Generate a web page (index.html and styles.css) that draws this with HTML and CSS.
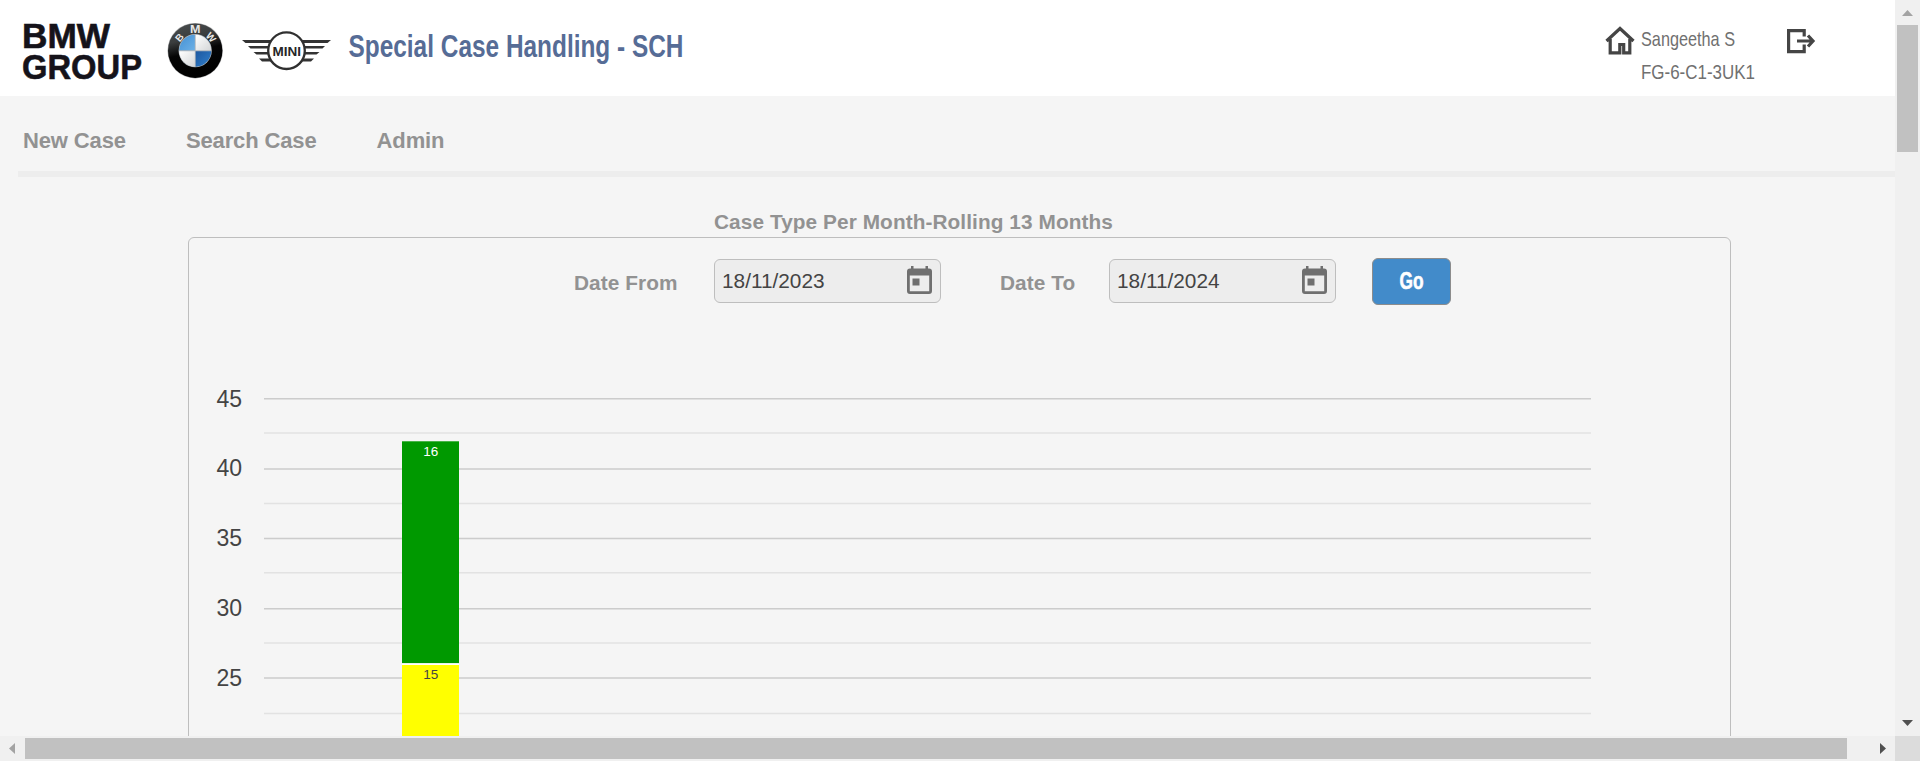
FILE: index.html
```html
<!DOCTYPE html>
<html lang="en">
<head>
<meta charset="utf-8">
<title>Special Case Handling - SCH</title>
<link rel="stylesheet" href="styles.css">
</head>
<body>
<div class="frame">
  <div class="page">
    <header class="header">
      <svg class="logos" width="342" height="96" viewBox="0 0 342 96" role="img" aria-label="BMW Group, BMW, MINI">
        <defs>
          <linearGradient id="ring" x1="0" y1="0" x2="0.25" y2="1">
            <stop offset="0" stop-color="#4b4f50"/><stop offset="0.35" stop-color="#3a3d3e"/><stop offset="0.6" stop-color="#050505"/><stop offset="1" stop-color="#000"/>
          </linearGradient>
          <linearGradient id="blueA" x1="0" y1="0" x2="1" y2="1"><stop offset="0" stop-color="#4390d4"/><stop offset="1" stop-color="#6cb0e6"/></linearGradient>
          <linearGradient id="blueB" x1="0" y1="0" x2="1" y2="1"><stop offset="0" stop-color="#1d58a0"/><stop offset="1" stop-color="#3080cc"/></linearGradient>
          <linearGradient id="silver" x1="0" y1="0" x2="1" y2="1"><stop offset="0" stop-color="#fff"/><stop offset="1" stop-color="#d4d6d8"/></linearGradient>
        </defs>
        <g class="wordmark">
          <text x="22" y="48" textLength="88" lengthAdjust="spacingAndGlyphs">BMW</text>
          <text x="22" y="78.500" textLength="120" lengthAdjust="spacingAndGlyphs">GROUP</text>
        </g>
        <circle cx="195.2" cy="50.7" r="27.7" fill="#b0b1b2"/>
        <circle cx="195.2" cy="50.7" r="27.200" fill="url(#ring)"/>
        <circle cx="195.2" cy="50.7" r="16.6" fill="#aeb5bb"/>
        <path d="M194.8 50.3V34.7A16 16 0 0 0 179.2 50.3Z" fill="url(#blueA)"/>
        <path d="M195.7 50.3V34.7A16 16 0 0 1 211.2 50.3Z" fill="url(#silver)"/>
        <path d="M195.7 51.2V66.7A16 16 0 0 0 211.2 51.2Z" fill="url(#blueB)"/>
        <path d="M194.8 51.2V66.7A16 16 0 0 1 179.2 51.2Z" fill="url(#silver)"/>
        <g class="roundel-text">
          <text x="189.9" y="33.3" text-anchor="start" textLength="10.500" lengthAdjust="spacingAndGlyphs">M</text>
          <text x="195.2" y="33.600" text-anchor="middle" transform="rotate(-50 195.2 50.7)">B</text>
          <text x="195.2" y="33.600" text-anchor="middle" transform="rotate(50 195.2 50.7)">W</text>
        </g>
        <g fill="#333">
          <path d="M242 40h29l-1.500 3H245.500Z"/><path d="M248 46h21.500v2.500H250.500Z"/><path d="M253.500 52h15.500l.5 2.500H256.500Z"/><path d="M259 58.500h11.500l1.500 3H262Z"/>
          <path d="M331 40h-29l1.500 3H327.500Z"/><path d="M325 46h-21.500v2.500H322.500Z"/><path d="M319.500 52h-15.500l-.5 2.500H316.500Z"/><path d="M314 58.500h-11.500l-1.500 3H311Z"/>
        </g>
        <circle cx="286.500" cy="50.700" r="18.300" fill="#fff" stroke="#303030" stroke-width="2.300"/>
        <text class="mini" x="272.500" y="55.500" textLength="28.500" lengthAdjust="spacingAndGlyphs">MINI</text>
      </svg>
      <svg class="title" width="350" height="96" viewBox="0 0 350 96"><text x="6.500" y="57" textLength="335" lengthAdjust="spacingAndGlyphs">Special Case Handling - SCH</text></svg>
      <div class="account">
        <svg class="home" width="30" height="30" viewBox="0 0 30 30"><path d="M1.500 15 15 2.500 28.500 15M5.200 13V26.800H14.800V18.500H18.700V26.800H24.800V13"/></svg>
        <svg class="user" width="122" height="96" viewBox="0 0 122 96"><text x="6" y="46" textLength="94" lengthAdjust="spacingAndGlyphs">Sangeetha S</text><text x="6" y="79" textLength="114" lengthAdjust="spacingAndGlyphs">FG-6-C1-3UK1</text></svg>
        <svg class="logout" width="30" height="28" viewBox="0 0 30 28"><path d="M19.200 9.500V3.600H3.600V24.600H19.200V17.500M12 14H28M23 8.500 28 14 23 19.500"/></svg>
      </div>
    </header>
    <nav class="nav"><a>New Case</a><a>Search Case</a><a>Admin</a></nav>
    <main>
      <h2 class="heading">Case Type Per Month-Rolling 13 Months</h2>
      <section class="panel">
        <div class="filters">
          <label class="label from">Date From</label>
          <div class="date"><span>18/11/2023</span>
            <svg width="27" height="30" viewBox="0 0 27 30"><use href="#cal"/></svg></div>
          <label class="label to">Date To</label>
          <div class="date"><span>18/11/2024</span>
            <svg width="27" height="30" viewBox="0 0 27 30"><g id="cal"><path fill-rule="evenodd" d="M5 1h2.500v2.500H19.500V1h2.500v2.500H23Q26 3.500 26 6.500V26Q26 29 23 29H4Q1 29 1 26V6.500Q1 3.500 4 3.500h1ZM3.800 10.500V26.200H23.200V10.500Z"/><path d="M6.500 13.500H13.500V20.500H6.500Z"/></g></svg></div>
          <button class="go"><svg width="26" height="30" viewBox="0 0 26 30"><text x="0.500" y="22.300" textLength="24" lengthAdjust="spacingAndGlyphs">Go</text></svg></button>
        </div>
        <svg class="chart" width="1541" height="420" viewBox="189 316 1541 420">
          <g class="minor"><path d="M264 433H1591M264 503.500H1591M264 572.700H1591M264 643H1591M264 713.400H1591"/></g>
          <g class="major"><path d="M264 398.800H1591M264 469.100H1591M264 538.400H1591M264 608.700H1591M264 678H1591"/></g>
          <rect x="402" y="441.300" width="57" height="222" fill="#090"/>
          <rect x="402" y="663.300" width="57" height="1.700" fill="#fff"/>
          <rect x="402" y="665" width="57" height="71" fill="#ff0"/>
          <g class="axis"><text x="242" y="406.700">45</text><text x="242" y="475.700">40</text><text x="242" y="545.700">35</text><text x="242" y="615.700">30</text><text x="242" y="685.700">25</text></g>
          <g class="value"><text x="430.700" y="456" fill="#fff">16</text><text x="430.700" y="679" fill="#444">15</text></g>
        </svg>
      </section>
    </main>
  </div>
  <div class="bar vertical">
    <svg width="25" height="25"><path d="M7 16H18L12.500 10Z" fill="#a3a3a3"/></svg>
    <div class="thumb"></div>
    <svg width="25" height="25"><path d="M7 9H18L12.500 15Z" fill="#505050"/></svg>
  </div>
  <div class="bar horizontal">
    <svg width="25" height="25"><path d="M15 7V18L9 12.500Z" fill="#a3a3a3"/></svg>
    <div class="thumb"></div>
    <svg width="25" height="25"><path d="M10 7V18L16 12.500Z" fill="#505050"/></svg>
  </div>
  <div class="corner"></div>
</div>
</body>
</html>
```
FILE: styles.css
```css
* { box-sizing: border-box; }
body { margin: 0; overflow: hidden; font-family: "Liberation Sans", Arial, sans-serif; color: #444; }
svg { display: block; flex: none; overflow: visible; }
.frame { display: grid; grid-template: 736px 25px / 1895px 25px; width: 1920px; height: 761px; }
.page { overflow: hidden; background: #f5f5f5; }
.header { display: flex; height: 96px; background: #fff; }
.wordmark { font: bold 35px "Liberation Sans", Arial, sans-serif; fill: #15131a; stroke: #15131a; stroke-width: .6px; }
.roundel-text { font: bold 10px "Liberation Sans", Arial, sans-serif; fill: #e8e8e8; }
.mini { font: bold 13px "Liberation Sans", Arial, sans-serif; fill: #262626; }
.title { font-size: 31px; font-weight: bold; fill: #566c96; }
.account { display: flex; margin-left: auto; padding-right: 80px; }
.home { margin-top: 26px; fill: none; stroke: #454545; stroke-width: 3.2px; }
.user { font-size: 21px; fill: #707070; }
.logout { margin: 27px 0 0 28px; fill: none; stroke: #454545; stroke-width: 3.2px; }
.nav { display: flex; gap: 60px; height: 81px; margin-left: 18px; padding: 33px 0 0 5px; border-bottom: 6px solid #ededed; font-size: 22px; line-height: 24px; font-weight: bold; letter-spacing: -.13px; color: #929292; }
.heading { margin: 33px 0 0 714px; height: 27px; font-size: 20.8px; line-height: 24px; letter-spacing: .08px; color: #929292; }
.panel { width: 1543px; height: 600px; margin-left: 188px; border: 1px solid #bebebe; border-radius: 6px; }
.filters { display: flex; align-items: flex-start; height: 78px; padding: 20px 0 0 385px; }
.label { margin-top: 13px; font-size: 20.8px; line-height: 24px; font-weight: bold; letter-spacing: .08px; color: #929292; }
.from { width: 140px; }
.to { width: 109px; margin-left: 59px; }
.date { display: flex; justify-content: space-between; align-items: center; width: 227px; height: 44px; margin-top: 1px; padding: 0 7px 1px 7px; border: 1px solid #bebebe; border-radius: 6px; background: #ededed; font-size: 20.8px; }
.date svg { margin-top: -1px; fill: #6f6f6f; }
.go { display: flex; justify-content: center; align-items: center; width: 79px; height: 47px; margin-left: 36px; padding: 0; border: 1px solid #8c8c8c; border-radius: 6px; background: #428bca; font: bold 23px "Liberation Sans", Arial, sans-serif; }
.go text { fill: #fff; stroke: #fff; stroke-width: .6px; }
.major { stroke: #ccc; stroke-width: 1.5px; }
.minor { stroke: #e2e2e2; stroke-width: 1.5px; }
.axis { font-size: 23px; text-anchor: end; fill: #444; }
.value { font-size: 13.5px; text-anchor: middle; }
.bar { display: flex; background: #f0f0f0; }
.vertical { flex-direction: column; }
.vertical .thumb { width: 21px; height: 127px; margin: 0 2px auto; background: #c1c1c1; }
.horizontal .thumb { width: 1822px; height: 21px; margin: 2px auto 0 0; background: #c1c1c1; }
.corner { background: #dcdcdc; }
```
